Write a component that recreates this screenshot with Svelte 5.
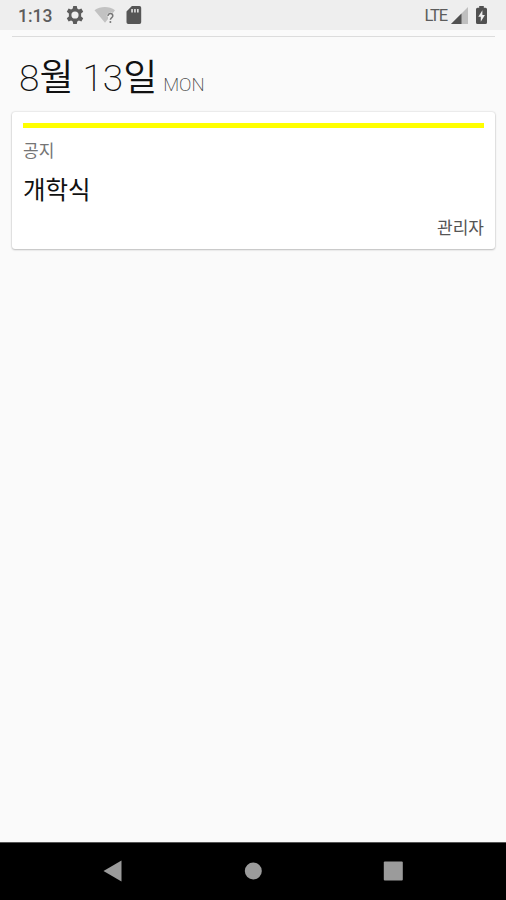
<script>
  const days = [
    {
      month: 8,
      day: 13,
      weekday: 'MON',
      events: [
        { category: '공지', title: '개학식', writer: '관리자', color: '#ffff00' }
      ]
    }
  ];
</script>

<div class="screen">
  <header class="status-bar">
    <div class="status-left">
      <span class="clock">1:13</span>
      <svg class="gear" viewBox="2 2 20 20" width="18" height="18">
        <path fill="#5c5c5c" fill-rule="evenodd" d="M10 2h4l.5 2.900 1.800 1 2.800-1 2 3.500-2.300 1.800v3.600l2.300 1.800-2 3.500-2.800-1-1.800 1L14 22h-4l-.5-2.900-1.800-1-2.800 1-2-3.500 2.300-1.800v-3.600L2.900 8.400l2-3.500 2.800 1 1.800-1zM12 8a4 4 0 1 0 0 8 4 4 0 0 0 0-8z" />
      </svg>
      <svg class="wifi" viewBox="0 0 22 18" width="22" height="18">
        <path fill="#c2c2c2" d="M.5 4.200C6.500-.1 15.300-.1 21 4.200L18.900 6.900C15.500 5.700 12.600 7.300 12.600 10.300H14V13L11 16.800z" />
        <path fill="none" stroke="#777" stroke-width="1.500" d="M14 9.900c0-3.100 4.800-3 4.800 0 0 1.600-2.400 1.800-2.400 3.900" />
        <circle cx="16.400" cy="15.900" r="1" fill="#777" />
      </svg>
      <svg class="sd" viewBox="0 0 16 18" width="16" height="18">
        <path fill="#565656" fill-rule="evenodd" d="M5.900 0H13.500Q15.200 0 15.200 1.700V16.300Q15.200 18 13.500 18H2.200Q.5 18 .5 16.300V5.400zM5.300 3v3.400h1.500V3zM8.200 3v3.400h1.500V3zM11.100 3v3.400h1.500V3z" />
      </svg>
    </div>
    <div class="status-right">
      <span class="network">LTE</span>
      <svg class="signal" viewBox="0 0 17 17" width="17" height="17">
        <path fill="#bfbfbf" d="M17 0V17H0z" />
        <path fill="#515151" d="M10.500 6.500V17H0z" />
      </svg>
      <svg class="battery" viewBox="0 0 11 18" width="11" height="18">
        <path fill="#505050" fill-rule="evenodd" d="M3.200 0h4.600v1.700h1.700Q11 1.700 11 3.200v13.300Q11 18 9.500 18h-8Q0 18 0 16.500V3.200Q0 1.700 1.500 1.700h1.700zM6.400 4.300 2.300 10.800H4.800V15.700L8.900 8.900H6.400z" />
      </svg>
    </div>
  </header>

  <main class="content">
    {#each days as item}
      <section class="day">
        <h1 class="date">
          <span class="num">{item.month}</span><span class="unit">월</span>
          <span class="num second">{item.day}</span><span class="unit">일</span>
          <span class="weekday">{item.weekday}</span>
        </h1>

        {#each item.events as event}
          <article class="card">
            <div class="bar" style="background: {event.color}"></div>
            <div class="category">{event.category}</div>
            <div class="title">{event.title}</div>
            <div class="writer">{event.writer}</div>
          </article>
        {/each}
      </section>
    {/each}
  </main>

  <nav class="nav-bar">
    <svg viewBox="0 0 22 22" width="22" height="22">
      <path fill="#9b9b9b" d="M19.500 .6V21.400L1.500 11z" />
    </svg>
    <svg viewBox="0 0 22 22" width="22" height="22">
      <circle cx="11.300" cy="11" r="8.500" fill="#9b9b9b" />
    </svg>
    <svg viewBox="0 0 22 22" width="22" height="22">
      <rect x="1.800" y="1.500" width="19" height="19" rx="1" fill="#9b9b9b" />
    </svg>
  </nav>
</div>

<style>
  :global(body) {
    margin: 0;
  }

  .screen {
    display: flex;
    flex-direction: column;
    height: 900px;
    background: #fafafa;
    font-family: Roboto, "Noto Sans CJK KR", sans-serif;
    overflow: hidden;
  }

  .status-bar {
    display: flex;
    justify-content: space-between;
    box-sizing: border-box;
    height: 30px;
    padding: 0 19px 0 18px;
    background: #eeeeee;
    color: #5c5c5c;
  }

  .status-left,
  .status-right {
    display: flex;
    align-items: center;
    height: 30px;
  }

  svg {
    display: block;
    flex: none;
  }

  .clock {
    width: 48px;
    padding-top: 1px;
    font-size: 17.5px;
    font-weight: 500;
    line-height: 32px;
  }

  .wifi {
    margin-left: 10px;
  }

  .sd {
    margin-left: 10px;
  }

  .network {
    padding-top: 1px;
    font-size: 16.5px;
    letter-spacing: -1.1px;
    line-height: 32px;
  }

  .signal {
    margin-left: 4px;
  }

  .battery {
    margin-left: 8px;
  }

  .content {
    flex: 1;
    padding: 6px 11px 0 12px;
  }

  .day {
    border-top: 1px solid #dcdcdc;
  }

  .date {
    display: flex;
    align-items: baseline;
    height: 75px;
    margin: 0;
    padding-left: 7px;
    color: #111;
    font-size: 37px;
    font-weight: 300;
    line-height: 83px;
    white-space: nowrap;
  }

  .num {
    font-weight: 200;
  }

  .unit {
    font-weight: 350;
  }

  .second {
    margin-left: 9px;
  }

  .weekday {
    margin-left: 6px;
    color: #444;
    font-size: 18.5px;
    font-weight: 200;
  }

  .card {
    box-sizing: border-box;
    height: 137px;
    padding: 11px 11px 0;
    background: #fff;
    border-radius: 3px;
    box-shadow: 0 0 2px rgba(0, 0, 0, 0.2), 0 1px 2px rgba(0, 0, 0, 0.2);
  }

  .bar {
    height: 5px;
  }

  .category {
    margin-top: 10px;
    color: #757575;
    font-size: 17px;
    line-height: 26px;
  }

  .title {
    margin-top: 9px;
    color: #111;
    font-size: 24.5px;
    line-height: 36px;
  }

  .writer {
    margin-top: 6px;
    color: #555;
    font-size: 17px;
    line-height: 26px;
    text-align: right;
  }

  .nav-bar {
    display: flex;
    justify-content: center;
    align-items: center;
    gap: 118px;
    box-sizing: border-box;
    height: 58px;
    padding-bottom: 2px;
    border-top: 1px solid #555;
    background: #000;
  }
</style>
